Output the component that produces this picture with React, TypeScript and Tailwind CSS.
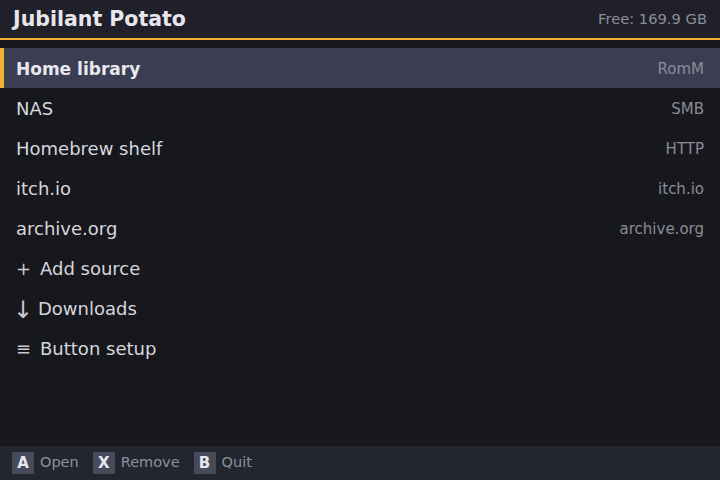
import React from "react";

const rows: { name: string; tag?: string; icon?: string }[] = [
  { name: "Home library", tag: "RomM" },
  { name: "NAS", tag: "SMB" },
  { name: "Homebrew shelf", tag: "HTTP" },
  { name: "itch.io", tag: "itch.io" },
  { name: "archive.org", tag: "archive.org" },
  { name: "Add source", icon: "+" },
  { name: "Downloads", icon: "↓" },
  { name: "Button setup", icon: "≡" },
];

export default function App() {
  return (
    <div
      className="w-[720px] h-[480px] bg-[#17181d] flex flex-col overflow-hidden"
      style={{ fontFamily: '"DejaVu Sans", sans-serif' }}
    >
      <div className="h-[38px] bg-[#1f2029] flex items-center justify-between pl-[13px] pr-[13px]">
        <span className="text-[20.5px] font-bold text-[#e6e6ec] leading-none">Jubilant Potato</span>
        <span className="text-[14.7px] text-[#8c8e9a] leading-none">Free: 169.9 GB</span>
      </div>
      <div className="h-[2px] bg-[#f0b232]" />
      <div className="flex-1 flex flex-col pt-[8px]">
        {rows.map((r, i) => {
          const sel = i === 0;
          return (
            <div
              key={r.name}
              className={
                sel
                  ? "h-[40px] flex items-center justify-between bg-[#3b3e53] border-l-[4px] border-[#f0b232] pl-[12px] pr-[16px]"
                  : "h-[40px] flex items-center justify-between pl-[16px] pr-[16px]"
              }
            >
              <span
                className={
                  sel
                    ? "text-[17px] font-bold text-[#e8e8ee] mt-[3px]"
                    : "text-[18px] text-[#d6d6dc] flex items-center"
                }
              >
                {r.icon === "↓" ? (
                  <span className="inline-block -ml-[3px] w-[25px] text-[24px] leading-none text-[#c8c8d0] mt-[3px]">↓</span>
                ) : r.icon ? (
                  <span className="inline-block w-[24px] text-[#c8c8d0]">{r.icon}</span>
                ) : null}
                {r.name}
              </span>
              {r.tag && <span className="text-[15px] text-[#8a8c98] mt-[2px]">{r.tag}</span>}
            </div>
          );
        })}
      </div>
      <div className="h-[34px] bg-[#23252f] flex items-center pl-[12px] gap-[14px]">
        {[
          ["A", "Open"],
          ["X", "Remove"],
          ["B", "Quit"],
        ].map(([k, l]) => (
          <div key={k} className="flex items-center gap-[6px]">
            <span className="w-[22px] h-[22px] bg-[#474a5b] flex items-center justify-center text-[15px] font-bold text-[#e6e6ec]">
              {k}
            </span>
            <span className="text-[14.5px] text-[#8e909c]">{l}</span>
          </div>
        ))}
      </div>
    </div>
  );
}
